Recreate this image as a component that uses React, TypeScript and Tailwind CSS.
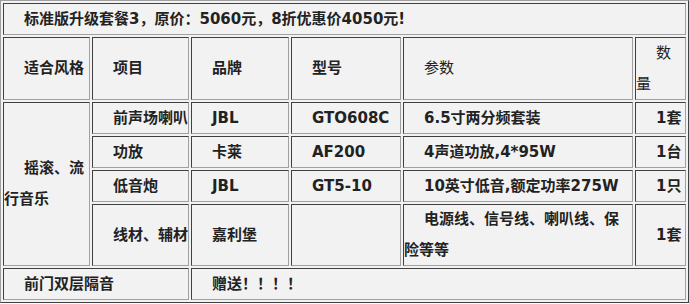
const FONT = "font-['DejaVu_Sans','Noto_Sans_CJK_SC',sans-serif]"

// classic border=1 table cell: sunken edges
function Cell({
  children,
  className = '',
  bold = true,
  nowrap = false,
}: {
  children?: React.ReactNode
  className?: string
  bold?: boolean
  nowrap?: boolean
}) {
  return (
    <div
      className={`bg-[#f2f2f2] border border-t-[#404040] border-l-[#404040] border-b-[#a0a0a0] border-r-[#a0a0a0] flex flex-col justify-center ${className}`}
    >
      {children && (
        <p
          className={`indent-[20px] leading-[31px] ${bold ? 'font-bold' : 'font-normal'} ${
            nowrap ? 'whitespace-nowrap' : ''
          }`}
        >
          {children}
        </p>
      )}
    </div>
  )
}

const ITEMS = [
  { item: '前声场喇叭', brand: 'JBL', model: 'GTO608C', spec: '6.5寸两分频套装', qty: '1套' },
  { item: '功放', brand: '卡莱', model: 'AF200', spec: '4声道功放,4*95W', qty: '1台' },
  { item: '低音炮', brand: 'JBL', model: 'GT5-10', spec: '10英寸低音,额定功率275W', qty: '1只' },
]

export default function App() {
  return (
    <div className={`w-[689px] h-[304px] bg-white ${FONT} text-[15px] text-[#222]`}>
      <div className="w-[689px] bg-[#f2f2f2] border border-t-[#a0a0a0] border-l-[#a0a0a0] border-b-[#404040] border-r-[#404040] p-[2px]">
        <div className="grid grid-cols-[87px_97px_98px_110px_230px_51px] grid-rows-[32px_63px_32px_32px_32px_62px_32px] gap-[2px]">
          {/* Title */}
          <Cell className="col-span-6" nowrap>
            标准版升级套餐3，原价：5060元，8折优惠价4050元!
          </Cell>

          {/* Header */}
          <Cell nowrap>适合风格</Cell>
          <Cell nowrap>项目</Cell>
          <Cell nowrap>品牌</Cell>
          <Cell nowrap>型号</Cell>
          <Cell bold={false} nowrap>参数</Cell>
          <Cell bold={false}>数量</Cell>

          {/* Style column spans the four item rows */}
          <Cell className="row-span-4">摇滚、流行音乐</Cell>

          {ITEMS.map((r) => (
            <div key={r.item} className="contents">
              <Cell nowrap>{r.item}</Cell>
              <Cell nowrap>{r.brand}</Cell>
              <Cell nowrap>{r.model}</Cell>
              <Cell nowrap>{r.spec}</Cell>
              <Cell nowrap>{r.qty}</Cell>
            </div>
          ))}

          <Cell nowrap>线材、辅材</Cell>
          <Cell nowrap>嘉利堡</Cell>
          <Cell />
          <Cell>电源线、信号线、喇叭线、保险等等</Cell>
          <Cell nowrap>1套</Cell>

          {/* Footer */}
          <Cell className="col-span-2" nowrap>
            前门双层隔音
          </Cell>
          <Cell className="col-span-4" nowrap>
            赠送！！！！
          </Cell>
        </div>
      </div>
    </div>
  )
}
